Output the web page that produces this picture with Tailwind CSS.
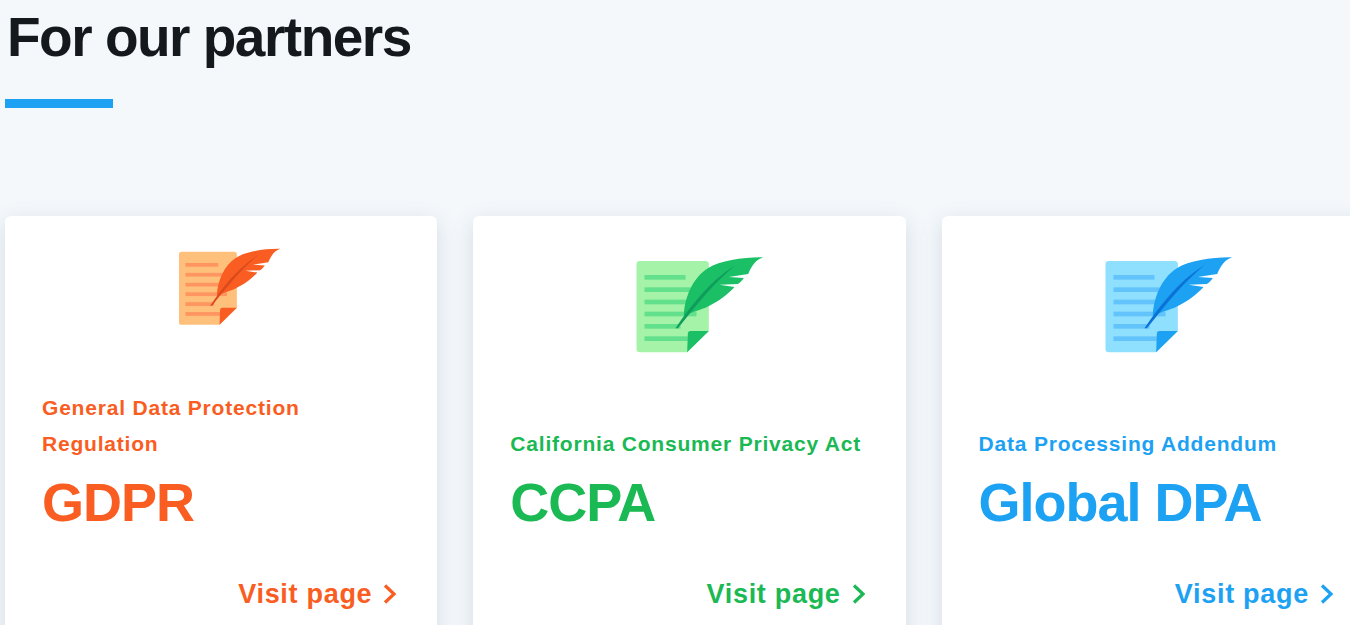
<!DOCTYPE html>
<html><head><meta charset="utf-8"><script src="https://cdn.jsdelivr.net/npm/@tailwindcss/browser@4"></script></head>
<body class="m-0">
<main class="h-[625px] w-[1350px] overflow-hidden bg-[#f4f8fb] pl-[5px] font-['Liberation_Sans',Arial,sans-serif]">
<h1 class="m-0 pt-[7px] pl-[2px] text-[55px] leading-[60px] font-bold tracking-[-1.5px] text-[#14191d]">For our partners</h1>
<div class="mt-[32px] h-[9px] w-[108px] bg-[#1da1f2]"></div>
<div class="mt-[108px] flex w-[1400px] items-start gap-[36px]">

<article class="flex h-[460px] w-[432.3px] shrink-0 flex-col rounded-md bg-white px-[37px] shadow-[0_6px_22px_rgba(90,110,140,0.2)]">
<div class="flex h-[174px] justify-center pt-[23px]">
<svg class="h-[92px] w-[120px]" viewBox="-19.5 0 450 345"><path d="M58 48H255a10 10 0 0 1 10 10V258L200 322H58a10 10 0 0 1-10-10V58a10 10 0 0 1 10-10Z" fill="#ffc07c"/><g fill="#ff9560"><rect x="72" y="90" width="123" height="14"/><rect x="72" y="127" width="155" height="14"/><rect x="72" y="164" width="155" height="14"/><rect x="72" y="200" width="156" height="14"/><rect x="72" y="237" width="108" height="14"/><rect x="72" y="274" width="130" height="14"/></g><path d="M265 258H210a8 8 0 0 0-8 8L200 322Z" fill="#f95d22"/><path d="M190 212C192 160 215 100 262 70C300 46 370 36 428 37C405 45 394 62 383 87L325 96L370 99C365 106 360 112 352 117L297 119L342 126C325 145 295 170 255 188C230 197 205 205 190 212Z" fill="#f95d22"/><path d="M165 250C205 190 265 110 345 60C275 118 225 185 172 250Z" fill="#d94a1c"/></svg>
</div>
<p class="flex h-[72px] items-end text-[21px] leading-[36px] font-bold tracking-[0.8px] text-[#f95d22]">General Data Protection Regulation</p>
<h2 class="mt-[10px] text-[54px] leading-[60px] font-bold tracking-[-1px] text-[#f95d22]">GDPR</h2>
<a class="mt-[42px] flex items-center justify-end gap-[11px] pr-[3px] text-[27px] leading-[40px] font-bold tracking-[0.7px] text-[#f95d22]">Visit page<svg class="h-[22px] w-[14px]" viewBox="0 0 14 22" fill="none" stroke="currentColor" stroke-width="3.2"><path d="M2 2.5l9 8.5-9 8.5"/></svg></a>
</article>

<article class="flex h-[460px] w-[432.3px] shrink-0 flex-col rounded-md bg-white px-[37px] shadow-[0_6px_22px_rgba(90,110,140,0.2)]">
<div class="flex h-[174px] justify-center pt-[29px]">
<svg class="h-[115px] w-[150px]" viewBox="-19.5 0 450 345"><path d="M58 48H255a10 10 0 0 1 10 10V258L200 322H58a10 10 0 0 1-10-10V58a10 10 0 0 1 10-10Z" fill="#a4f3a8"/><g fill="#62e08c"><rect x="72" y="90" width="123" height="14"/><rect x="72" y="127" width="155" height="14"/><rect x="72" y="164" width="155" height="14"/><rect x="72" y="200" width="156" height="14"/><rect x="72" y="237" width="108" height="14"/><rect x="72" y="274" width="130" height="14"/></g><path d="M265 258H210a8 8 0 0 0-8 8L200 322Z" fill="#1bc066"/><path d="M190 212C192 160 215 100 262 70C300 46 370 36 428 37C405 45 394 62 383 87L325 96L370 99C365 106 360 112 352 117L297 119L342 126C325 145 295 170 255 188C230 197 205 205 190 212Z" fill="#1bc066"/><path d="M165 250C205 190 265 110 345 60C275 118 225 185 172 250Z" fill="#0f9d5c"/></svg>
</div>
<p class="flex h-[72px] items-end text-[21px] leading-[36px] font-bold tracking-[0.8px] text-[#1bb954]">California Consumer Privacy Act</p>
<h2 class="mt-[10px] text-[54px] leading-[60px] font-bold tracking-[-1px] text-[#1bb954]">CCPA</h2>
<a class="mt-[42px] flex items-center justify-end gap-[11px] pr-[3px] text-[27px] leading-[40px] font-bold tracking-[0.7px] text-[#1bb954]">Visit page<svg class="h-[22px] w-[14px]" viewBox="0 0 14 22" fill="none" stroke="currentColor" stroke-width="3.2"><path d="M2 2.5l9 8.5-9 8.5"/></svg></a>
</article>

<article class="flex h-[460px] w-[432.3px] shrink-0 flex-col rounded-md bg-white px-[37px] shadow-[0_6px_22px_rgba(90,110,140,0.2)]">
<div class="flex h-[174px] justify-center pt-[29px]">
<svg class="h-[115px] w-[150px]" viewBox="-19.5 0 450 345"><path d="M58 48H255a10 10 0 0 1 10 10V258L200 322H58a10 10 0 0 1-10-10V58a10 10 0 0 1 10-10Z" fill="#8fdfff"/><g fill="#62c4fb"><rect x="72" y="90" width="123" height="14"/><rect x="72" y="127" width="155" height="14"/><rect x="72" y="164" width="155" height="14"/><rect x="72" y="200" width="156" height="14"/><rect x="72" y="237" width="108" height="14"/><rect x="72" y="274" width="130" height="14"/></g><path d="M265 258H210a8 8 0 0 0-8 8L200 322Z" fill="#1da1f2"/><path d="M190 212C192 160 215 100 262 70C300 46 370 36 428 37C405 45 394 62 383 87L325 96L370 99C365 106 360 112 352 117L297 119L342 126C325 145 295 170 255 188C230 197 205 205 190 212Z" fill="#1da1f2"/><path d="M165 250C205 190 265 110 345 60C275 118 225 185 172 250Z" fill="#0b72d6"/></svg>
</div>
<p class="flex h-[72px] items-end text-[21px] leading-[36px] font-bold tracking-[0.8px] text-[#1da1f2]">Data Processing Addendum</p>
<h2 class="mt-[10px] text-[54px] leading-[60px] font-bold tracking-[-1px] text-[#1da1f2]">Global DPA</h2>
<a class="mt-[42px] flex items-center justify-end gap-[11px] pr-[3px] text-[27px] leading-[40px] font-bold tracking-[0.7px] text-[#1da1f2]">Visit page<svg class="h-[22px] w-[14px]" viewBox="0 0 14 22" fill="none" stroke="currentColor" stroke-width="3.2"><path d="M2 2.5l9 8.5-9 8.5"/></svg></a>
</article>
</div>
</main>
</body></html>
